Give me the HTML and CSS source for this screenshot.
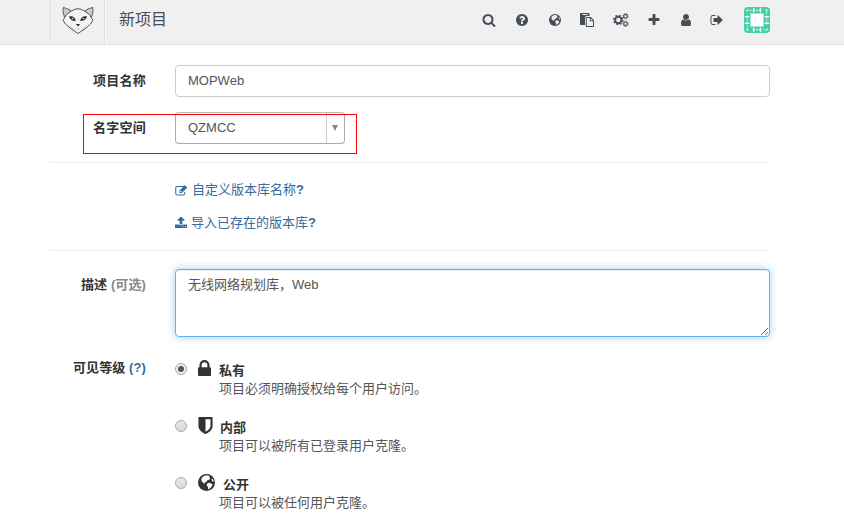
FILE: index.html
```html
<!DOCTYPE html>
<html lang="zh-CN">
<head>
<meta charset="utf-8">
<title>新项目</title>
<link rel="stylesheet" href="styles.css">
</head>
<body>
<svg class="defs" aria-hidden="true">
  <symbol id="globe" viewBox="0 0 24 24">
    <circle cx="12" cy="12" r="12"/>
    <path class="land" d="M6 4.500 9 2.500 12.500 1.800 16.500 2.800 15.500 4.500 17.500 5.500 16 8 13.500 8.500 12 11 9.500 11.500 10 13.500 8 13 5.500 10.500 4.500 7.500ZM13 13.500 16 12.500 20.500 14.500 19.500 17.500 17 20 14.500 21.800 14 18.500 12.200 16ZM19 7.500 21 7 22.300 10.500 20.500 11Z"/>
  </symbol>
</svg>
<header class="navbar">
  <div class="navbar-inner">
    <a class="logo" href="#">
      <svg width="34" height="30" viewBox="0 0 34 30">
        <path class="fox-ear" d="M3.500 12C2 8 1.800 4.500 2.500 2.500 5.500 3 8.500 4.500 10.500 6.500M30.500 12C32 8 32.200 4.500 31.500 2.500 28.500 3 25.500 4.500 23.500 6.500"/>
        <path class="fox-face" d="M10.500 6Q17 1.500 23.500 6L28.500 9.500 32 15.500 29.500 19 25 23 17 28.500 9 23 4.500 19 2 15.500 5.500 9.500Z"/>
        <path class="fox-line" d="M9 21 14 25.500M25 21 20 25.500M15 23.500 17 24.500 19 23.500"/>
        <path class="fox-eye" d="M8 11.500Q12.500 10 15 15.500 10.500 17 8 11.500ZM26 11.500Q21.500 10 19 15.500 23.500 17 26 11.500ZM15 19h4l-2 2.500Z"/>
        <circle cx="11.500" cy="13.500" r=".8" fill="#fff"/><circle cx="22.500" cy="13.500" r=".8" fill="#fff"/>
      </svg>
    </a>
    <h1 class="title">新项目</h1>
    <nav class="nav">
      <a href="#"><svg viewBox="0 0 1792 1792"><path d="M1216 832q0-185-131.500-316.500t-316.500-131.500-316.500 131.500-131.500 316.500 131.500 316.500 316.500 131.500 316.500-131.500 131.500-316.500zm512 832q0 52-38 90t-90 38q-54 0-90-38l-343-342q-179 124-399 124-143 0-273.500-55.500t-225-150-150-225-55.500-273.500 55.500-273.500 150-225 225-150 273.500-55.500 273.500 55.500 225 150 150 225 55.500 273.500q0 220-124 399l343 343q37 37 37 90z"/></svg></a>
      <a href="#"><svg viewBox="0 0 1792 1792"><path d="M1024 1376v-192q0-14-9-23t-23-9h-192q-14 0-23 9t-9 23v192q0 14 9 23t23 9h192q14 0 23-9t9-23zm256-672q0-88-55.500-163t-138.500-116-170-41q-243 0-371 213-15 24 8 42l132 100q7 6 19 6 16 0 25-12 53-68 86-92 34-24 86-24 48 0 85.500 26t37.500 59q0 38-20 61t-68 45q-63 28-115.500 86.500t-52.500 125.500v36q0 14 9 23t23 9h192q14 0 23-9t9-23q0-19 21.500-49.500t54.500-49.500q32-18 49-28.500t46-35 44.500-48 28-60.500 12.500-81zm384 192q0 209-103 385.500t-279.500 279.500-385.500 103-385.500-103-279.500-279.500-103-385.500 103-385.500 279.500-279.500 385.500-103 385.500 103 279.500 279.500 103 385.500z"/></svg></a>
      <a href="#"><svg class="nav-globe"><use href="#globe"/></svg></a>
      <a href="#"><svg class="wide" viewBox="0 0 15 14"><path fill-rule="evenodd" d="M.8 0H8.700Q9.500 0 9.500.8V3H6.500Q5 3 5 4.500V12H.8Q0 12 0 11.200V.8Q0 0 .8 0ZM2.500 1v1h5V1Z"/><path fill-rule="evenodd" d="M6.500 4H11L14 7.200V13.300Q14 14 13.300 14H6.500Q5.800 14 5.800 13.300V4.700Q5.800 4 6.500 4ZM6.800 5v8H13V8.300H9.800V5ZM10.800 5.200v2.200h2Z"/></svg></a>
      <a href="#"><svg class="wide gears" viewBox="0 0 16 14"><g fill="none" stroke="currentColor"><circle cx="5.300" cy="7" r="3.200" stroke-width="2"/><circle cx="5.300" cy="7" r="4.700" stroke-width="1.300" stroke-dasharray="1.850 1.841"/><circle cx="12.500" cy="3.200" r="1.800" stroke-width="1.200"/><circle cx="12.500" cy="3.200" r="2.700" stroke-width=".8" stroke-dasharray="1.060 1.060"/><circle cx="12.500" cy="10.800" r="1.800" stroke-width="1.200"/><circle cx="12.500" cy="10.800" r="2.700" stroke-width=".8" stroke-dasharray="1.060 1.060"/></g></svg></a>
      <a href="#"><svg viewBox="0 0 1792 1792"><path d="M1600 736v192q0 40-28 68t-68 28h-416v416q0 40-28 68t-68 28h-192q-40 0-68-28t-28-68v-416h-416q-40 0-68-28t-28-68v-192q0-40 28-68t68-28h416v-416q0-40 28-68t68-28h192q40 0 68 28t28 68v416h416q40 0 68 28t28 68z"/></svg></a>
      <a href="#"><svg viewBox="0 0 1792 1792"><path d="M1536 1399q0 109-62.500 187t-150.500 78h-854q-88 0-150.500-78t-62.500-187q0-85 8.500-160.500t31.500-152 58.500-131 94-89 134.500-34.500q131 128 313 128t313-128q76 0 134.500 34.500t94 89 58.500 131 31.500 152 8.500 160.500zm-256-887q0 159-112.500 271.500t-271.500 112.500-271.500-112.500-112.500-271.500 112.500-271.500 271.500-112.500 271.500 112.500 112.500 271.500z"/></svg></a>
      <a href="#"><svg viewBox="0 0 1792 1792"><path d="M704 1440q0 4 1 20t.5 26.500-3 23.500-10 19.500-20.500 6.500h-320q-119 0-203.500-84.500t-84.500-203.500v-704q0-119 84.500-203.500t203.500-84.500h320q13 0 22.500 9.500t9.500 22.500q0 4 1 20t.5 26.500-3 23.500-10 19.500-20.500 6.500h-320q-66 0-113 47t-47 113v704q0 66 47 113t113 47h312l11.500 1 11.500 3 8 5.500 7 9 2 13.500zm928-544q0 26-19 45l-544 544q-19 19-45 19t-45-19-19-45v-288h-448q-26 0-45-19t-19-45v-384q0-26 19-45t45-19h448v-288q0-26 19-45t45-19 45 19l544 544q19 19 19 45z"/></svg></a>
    </nav>
    <a class="avatar" href="#">
      <svg width="26" height="26" viewBox="0 0 26 26">
        <rect width="26" height="26" fill="#45cfa8"/>
        <g fill="#fff">
          <path d="M6.500 6.500h13v13h-13Z"/>
          <path id="leafs" d="M9.700 .3Q11.600 3.200 9.700 6 7.800 3.200 9.700 .3ZM16.300 .3Q18.200 3.200 16.300 6 14.400 3.200 16.300 .3ZM11.300 3.200Q13 2.200 14.700 3.200 13 4.200 11.300 3.200ZM1.500 4.500 4.500 1.500 4 4ZM4.800 3.200Q6.500 2.400 7.600 3.200 6.500 4.200 4.800 3.200Z"/>
          <use href="#leafs" transform="rotate(90 13 13)"/>
          <use href="#leafs" transform="rotate(180 13 13)"/>
          <use href="#leafs" transform="rotate(270 13 13)"/>
        </g>
      </svg>
    </a>
  </div>
</header>

<form class="form">
  <div class="row row-name">
    <label class="label">项目名称</label>
    <div class="input">MOPWeb</div>
  </div>
  <div class="row row-space">
    <label class="label">名字空间</label>
    <div class="select"><span>QZMCC</span><i class="caret"></i></div>
    <div class="highlight"></div>
  </div>
  <div class="links">
    <a href="#"><svg width="13" height="13" viewBox="0 0 14 13"><path fill="none" stroke="currentColor" stroke-width="1.100" d="M9.500 2.200H2.500Q.8 2.200.8 3.900V9.700Q.8 11.400 2.500 11.400H8.800Q10.500 11.400 10.500 9.700V8"/><path fill-rule="evenodd" d="M4.800 9.200V6.600L10.600.8 13.200 3.400 7.400 9.200ZM5.800 7.100V8.200H6.900L7.400 7.700 6.300 6.600Z"/></svg><span>自定义版本库名称<b>?</b></span></a>
    <a href="#"><svg width="12" height="12" viewBox="64 128 1664 1664"><path d="M1344 1472q0-26-19-45t-45-19-45 19-19 45 19 45 45 19 45-19 19-45zm256 0q0-26-19-45t-45-19-45 19-19 45 19 45 45 19 45-19 19-45zm128-224v320q0 40-28 68t-68 28h-1472q-40 0-68-28t-28-68v-320q0-40 28-68t68-28h427q21 56 70.500 92t110.500 36h256q61 0 110.500-36t70.500-92h427q40 0 68 28t28 68zm-325-648q-17 40-59 40h-256v448q0 26-19 45t-45 19h-256q-26 0-45-19t-19-45v-448h-256q-42 0-59-40-17-39 14-69l448-448q18-19 45-19t45 19l448 448q31 30 14 69z"/></svg><span>导入已存在的版本库<b>?</b></span></a>
  </div>
  <div class="row row-desc">
    <label class="label">描述 <span class="muted">(可选)</span></label>
    <textarea class="textarea">无线网络规划库，Web</textarea>
  </div>
  <div class="row row-level">
    <label class="label">可见等级 <a href="#">(?)</a></label>
    <div class="options">
      <div class="option">
        <i class="radio checked"></i>
        <svg class="opt-icon lock" viewBox="320 128 1152 1408"><path d="M640 768h512v-192q0-106-75-181t-181-75-181 75-75 181v192zm832 96v576q0 40-28 68t-68 28h-960q-40 0-68-28t-28-68v-576q0-40 28-68t68-28h32v-192q0-184 132-316t316-132 316 132 132 316v192h32q40 0 68 28t28 68z"/></svg>
        <div class="opt-text"><strong>私有</strong><p>项目必须明确授权给每个用户访问。</p></div>
      </div>
      <div class="option">
        <i class="radio"></i>
        <svg class="opt-icon shield" viewBox="256 128 1280 1536"><path d="M1344 960v-640h-448v1137q119-63 213-137 235-184 235-360zm192-768v768q0 86-33.500 170.500t-83 150-118 127.500-126.500 103-121 77.500-89.500 49.500-42.500 20q-12 6-26 6t-26-6q-16-7-42.500-20t-89.500-49.500-121-77.500-126.500-103-118-127.500-83-150-33.500-170.500v-768q0-26 19-45t45-19h1152q26 0 45 19t19 45z"/></svg>
        <div class="opt-text"><strong class="in1">内部</strong><p>项目可以被所有已登录用户克隆。</p></div>
      </div>
      <div class="option">
        <i class="radio"></i>
        <svg class="opt-icon earth"><use href="#globe"/></svg>
        <div class="opt-text"><strong class="in2">公开</strong><p>项目可以被任何用户克隆。</p></div>
      </div>
    </div>
  </div>
</form>
</body>
</html>
```
FILE: styles.css
```css
* { box-sizing: border-box; }
body {
  margin: 0;
  height: 520px;
  overflow: hidden;
  background: #fff;
  color: #333;
  font: 13px/20px "Liberation Sans", "Noto Sans CJK SC", sans-serif;
}
a { color: #3b6a9c; text-decoration: none; }
svg { display: block; fill: currentColor; flex: none; }
.defs { position: absolute; width: 0; height: 0; }
.land { fill: var(--land, #fff); }

.navbar { height: 45px; background: #f0f0f0; border-bottom: 1px solid #ddd; }
.navbar-inner { display: flex; width: 720px; height: 44px; margin-left: 50px; }
.logo {
  display: flex;
  justify-content: center;
  width: 55px;
  padding-top: 5px;
  border: solid #dedede;
  border-width: 0 1px;
  box-shadow: inset 1px 0 #fafafa, 1px 0 #fafafa;
}
.fox-ear { fill: #ccc; stroke: #666; stroke-width: 1.1; }
.fox-face { fill: #f4f4f4; stroke: #555; stroke-width: 1; }
.fox-line { fill: none; stroke: #bbb; stroke-width: .8; }
.fox-eye { fill: #222; }
.title {
  margin: 0 0 0 14px;
  color: #474d57;
  font-size: 16px;
  font-weight: 400;
  line-height: 40px;
}
.nav { display: flex; margin-left: auto; height: 40px; align-items: center; }
.nav a { display: flex; justify-content: center; width: 31px; color: #474d57; }
.nav a:nth-child(-n+6) { width: 33px; }
.nav svg { width: 14px; height: 14px; }
.nav .nav-globe { width: 12px; height: 12px; --land: #f0f0f0; }
.nav .wide { width: 15px; }
.nav .gears { width: 16px; }
.avatar { margin: 7px 0 0 12px; width: 26px; height: 26px; border-radius: 4px; overflow: hidden; }

.form { width: 720px; margin-left: 50px; padding-top: 20px; }
.row { display: flex; position: relative; }
.label { width: 96px; margin-right: 29px; text-align: right; font-weight: 700; white-space: nowrap; }
.muted { color: #888; }
.row-name { height: 47px; }
.row-name .label, .row-space .label { line-height: 31px; letter-spacing: .25px; }
.input, .textarea {
  flex: 1;
  height: 32px;
  border: 1px solid #ccc;
  border-radius: 4px;
  padding: 0 12px;
  color: #555;
  line-height: 30px;
}
.row-space { height: 51px; border-bottom: 1px solid #eee; }
.select {
  display: flex;
  justify-content: space-between;
  width: 170px;
  height: 32px;
  border: 1px solid #aaa;
  border-top-color: #bbb;
  border-radius: 4px;
  padding-left: 12px;
  color: #555;
  line-height: 30px;
}
.caret { display: flex; justify-content: center; align-items: center; width: 18px; border-left: 1px solid #ccc; }
.caret::before { content: ""; margin: -1px 1px 0 0; border: 3.5px solid transparent; border-top: 6px solid #888; border-bottom: 0; }
.highlight { position: absolute; left: 33px; top: 2px; width: 274px; height: 40px; border: 1px solid #f00; }
.links { height: 88px; padding: 17px 0 0 125px; border-bottom: 1px solid #eee; }
.links a { display: flex; align-items: center; gap: 4px; height: 20px; margin-bottom: 13px; }
.row-desc { padding-top: 18px; height: 86px; }
.row-desc .label { line-height: 31px; letter-spacing: .1px; }
.textarea {
  display: block;
  height: 68px;
  margin: 0;
  padding: 5px 12px;
  font: inherit;
  line-height: 20px;
  outline: 0;
  resize: vertical;
  border-color: #66afe9;
  box-shadow: inset 0 1px 1px rgba(0,0,0,.075), 0 0 8px rgba(102,175,233,.6);
}
.row-level { padding-top: 20px; }
.row-level .label { line-height: 21px; letter-spacing: .1px; }
.option { display: flex; height: 57px; }
.radio {
  display: grid;
  place-items: center;
  flex: none;
  width: 12px;
  height: 12px;
  margin-top: 6px;
  border: 1px solid #a8a8a8;
  border-radius: 50%;
  background: linear-gradient(#e8e8e8, #d9d9d9);
}
.checked { background: #eee; }
.checked::before { content: ""; width: 6px; height: 6px; border-radius: 50%; background: #555; }
.opt-icon { color: #333; margin-left: 11px; }
.lock { width: 13px; height: 16px; margin-top: 3px; }
.shield { width: 15px; height: 17px; margin-top: 3px; }
.earth { width: 17px; height: 17px; margin-top: 3px; }
.opt-text { margin-left: auto; width: 551px; padding-top: 5px; line-height: 18px; }
.options { flex: 1; }
.opt-text p { margin: 0; color: #555; white-space: nowrap; }
.opt-text strong { display: block; }
.opt-text .in1 { padding-left: 1px; }
.opt-text .in2 { padding-left: 4px; }
```
